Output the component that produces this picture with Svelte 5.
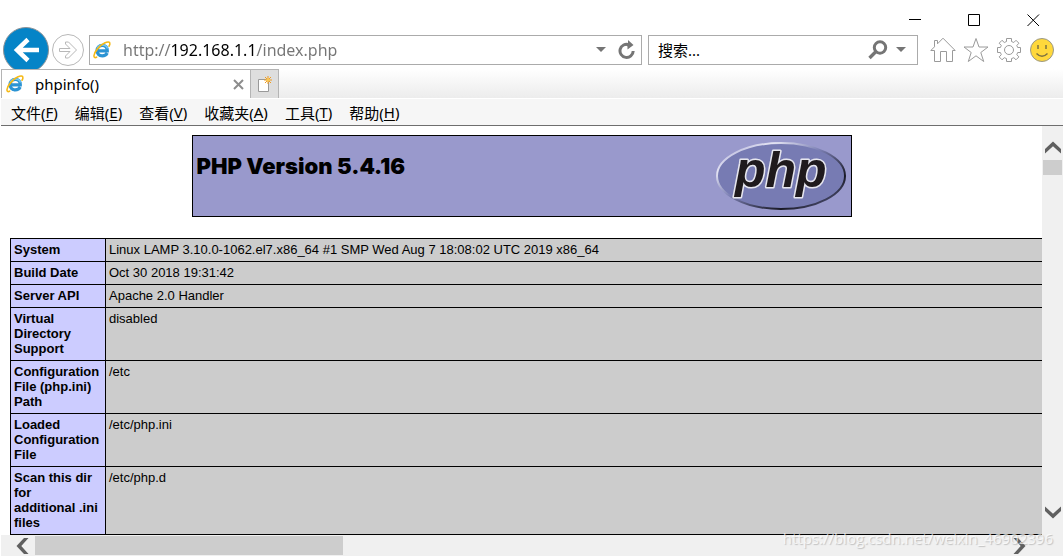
<script lang="ts">
  let url = $state('http://192.168.1.1/index.php');
  let query = $state('');

  const menus = [
    { label: '文件', key: 'F' },
    { label: '编辑', key: 'E' },
    { label: '查看', key: 'V' },
    { label: '收藏夹', key: 'A' },
    { label: '工具', key: 'T' },
    { label: '帮助', key: 'H' },
  ];

  const rows = [
    ['System', 'Linux LAMP 3.10.0-1062.el7.x86_64 #1 SMP Wed Aug 7 18:08:02 UTC 2019 x86_64'],
    ['Build Date', 'Oct 30 2018 19:31:42'],
    ['Server API', 'Apache 2.0 Handler'],
    ['Virtual Directory Support', 'disabled'],
    ['Configuration File (php.ini) Path', '/etc'],
    ['Loaded Configuration File', '/etc/php.ini'],
    ['Scan this dir for additional\u00a0.ini files', '/etc/php.d'],
  ];
</script>

{#snippet ieIcon()}
  <svg class="ie" viewBox="0 0 18 18" width="18" height="18" aria-hidden="true">
    <path d="M14.200 12C13.200 14 11.500 14.900 9.300 14.900C6 14.900 4 12.700 4 9.600C4 6.400 6.200 4.400 9.300 4.400C12.600 4.400 14.400 6.600 14.300 9.800H5.500" fill="none" stroke="#2b93d3" stroke-width="3.200" />
    <path d="M4 7.500C5 5.200 7 4 9.300 4C11.700 4 13.700 5.100 14.500 7.500" fill="none" stroke="#76c8f0" stroke-width="1.400" />
    <path d="M3.600 16.200C1.700 17.100 0.800 16.400 1 14.500C1.400 10.900 6.300 4.600 11.600 2C14.600 0.600 16.800 0.700 16.900 2.400C17 3.300 16.600 4.300 16 5.200" fill="none" stroke="#f5b916" stroke-width="1.600" stroke-linecap="round" />
  </svg>
{/snippet}

{#snippet chevron(turn: string)}
  <svg class="chevron {turn}" viewBox="0 0 18 18" width="18" height="18" aria-hidden="true">
    <path d="M1 15.500V11L9 3.500L17 11V15.500L9 8.300Z" fill="#606060" />
  </svg>
{/snippet}

<div class="window">
  <div class="titlebar">
    <button aria-label="Minimize">
      <svg viewBox="0 0 13 13" width="13" height="13"><path d="M0 5.500H12" stroke="#000" /></svg>
    </button>
    <button aria-label="Maximize">
      <svg viewBox="0 0 13 13" width="13" height="13"><path d="M.5 .5H11.500V11.500H.5Z" fill="none" stroke="#000" /></svg>
    </button>
    <button aria-label="Close">
      <svg viewBox="0 0 13 13" width="13" height="13"><path d="M.5 .5L12 12M12 .5L.5 12" stroke="#000" /></svg>
    </button>
  </div>

  <div class="navbar">
    <button class="back" aria-label="Back">
      <svg viewBox="0 0 48 42" width="48" height="42">
        <circle cx="24" cy="23" r="22.500" fill="#0584c7" stroke="#8d9297" />
        <path d="M37 23H16M26 12.500L15 23L26 33.500" fill="none" stroke="#fff" stroke-width="4.500" />
      </svg>
    </button>
    <button class="forward" aria-label="Forward">
      <svg viewBox="0 0 32 32" width="32" height="32">
        <circle cx="16" cy="16" r="15.500" fill="#fff" stroke="#b8b8b8" />
        <path d="M7.500 14.500H18L13.500 10V8H16.500L24.500 16L16.500 24H13.500V22L18 17.500H7.500Z" fill="#fff" stroke="#b8b8b8" />
      </svg>
    </button>

    <div class="box address">
      {@render ieIcon()}
      <input class="url" type="text" aria-label="Address" bind:value={url} />
      <button aria-label="Show address list">
        <svg viewBox="0 0 10 6" width="10" height="6"><path d="M0 0H10L5 5Z" fill="#757575" /></svg>
      </button>
      <button aria-label="Refresh">
        <svg viewBox="0 0 18 20" width="18" height="20">
          <path d="M11 4.700A6.600 6.600 0 1 0 15.200 11" fill="none" stroke="#757575" stroke-width="3" />
          <path d="M10 0L15.500 5L9.500 9.500V6.500L7 4.500L10 3.500Z" fill="#757575" />
        </svg>
      </button>
    </div>

    <div class="box search">
      <input type="text" aria-label="Search" placeholder="搜索..." bind:value={query} />
      <button aria-label="Search">
        <svg viewBox="0 0 20 20" width="20" height="20">
          <circle cx="12" cy="7.500" r="5.700" fill="none" stroke="#757575" stroke-width="3" />
          <path d="M8 11.500L1.500 18" stroke="#757575" stroke-width="3.400" />
        </svg>
      </button>
      <button aria-label="Search options">
        <svg viewBox="0 0 10 6" width="10" height="6"><path d="M0 0H10L5 5Z" fill="#757575" /></svg>
      </button>
    </div>

    <div class="tools">
      <button aria-label="Home">
        <svg viewBox="0 0 26 26" width="26" height="26">
          <path d="M.8 13.500L4.500 9.800V3.500H7.500V6.800L13 1.200L25.200 13.500H22.500V24.500H16.500V14.500H10.500V24.500H4.500V13.500Z" fill="#fff" stroke="#9a9a9a" stroke-linejoin="round" />
        </svg>
      </button>
      <button aria-label="Favorites">
        <svg viewBox="0 0 26 26" width="26" height="26">
          <path d="M13 1.500L16 10H25L17.800 15.500L20.700 24.500L13 18.800L5.300 24.500L8.200 15.500L1 10H10Z" fill="#fff" stroke="#9a9a9a" stroke-linejoin="round" />
        </svg>
      </button>
      <button aria-label="Tools">
        <svg viewBox="0 0 26 26" width="26" height="26">
          <path d="M10.500 1.500H15.500V4.500L17.800 5.500L20 3.300L22.900 6.200L20.800 8.500L21.700 10.500H24.500V15.500H21.700L20.800 17.700L22.900 19.900L20 22.800L17.800 20.700L15.500 21.600V24.500H10.500V21.600L8.300 20.700L6 22.800L3.200 19.900L5.300 17.700L4.400 15.500H1.500V10.500H4.400L5.300 8.500L3.200 6.200L6 3.300L8.300 5.500L10.500 4.500Z" fill="#fff" stroke="#9a9a9a" stroke-linejoin="round" />
          <circle cx="13" cy="13" r="4.500" fill="none" stroke="#9a9a9a" />
        </svg>
      </button>
      <button aria-label="Send a smile">
        <svg viewBox="0 0 26 26" width="26" height="26">
          <circle cx="13" cy="13" r="11.500" fill="#ffd83b" stroke="#99988a" />
          <path d="M9 8V12M17 8V12" stroke="#7d7140" stroke-width="1.500" />
          <path d="M7.500 16.500Q13 22 18.500 16.500" fill="none" stroke="#7d7140" stroke-width="1.500" />
        </svg>
      </button>
    </div>
  </div>

  <div class="tabs">
    <div class="tab">
      {@render ieIcon()}
      <span>phpinfo()</span>
      <button aria-label="Close tab">
        <svg viewBox="0 0 11 11" width="11" height="11"><path d="M1 1L10 10M10 1L1 10" stroke="#8d8d8d" stroke-width="2" /></svg>
      </button>
    </div>
    <button class="new-tab" aria-label="New tab">
      <svg viewBox="0 0 15 17" width="15" height="17">
        <path d="M1.500 3.500H11.500V15.500H1.500Z" fill="#fff" stroke="#999" />
        <path d="M11 0V8M7 4H15M8 1L14 7M14 1L8 7" stroke="#ef9b20" />
        <circle cx="11" cy="4" r="1.800" fill="#fbc74f" />
      </svg>
    </button>
  </div>

  <div class="menubar">
    {#each menus as menu}
      <button>{menu.label}(<u>{menu.key}</u>)</button>
    {/each}
  </div>

  <div class="viewport">
    <main>
      <div class="banner">
        <h1>PHP Version 5.4.16</h1>
        <svg viewBox="0 0 132 70" width="132" height="70" role="img" aria-label="PHP logo">
          <defs>
            <linearGradient id="rim" x1="0" y1="0" x2="1" y2="1">
              <stop offset="0" stop-color="#9a9acc" />
              <stop offset="0.22" stop-color="#e4e4f3" />
              <stop offset="0.45" stop-color="#7c80b4" />
              <stop offset="0.75" stop-color="#191925" />
              <stop offset="1" stop-color="#6d70a2" />
            </linearGradient>
          </defs>
          <ellipse cx="65" cy="35" rx="64" ry="33" fill="#777bb3" stroke="url(#rim)" stroke-width="2" />
          <text class="logo-text" x="19" y="46">php</text>
        </svg>
      </div>

      <table>
        <tbody>
          {#each rows as [name, value]}
            <tr>
              <th scope="row">{name}</th>
              <td>{value}</td>
            </tr>
          {/each}
        </tbody>
      </table>
    </main>

    <div class="vscroll">
      <button aria-label="Scroll up">{@render chevron('up')}</button>
      <div class="thumb"></div>
      <button class="end" aria-label="Scroll down">{@render chevron('down')}</button>
    </div>
  </div>

  <div class="hscroll">
    <button aria-label="Scroll left">{@render chevron('left')}</button>
    <div class="track"><div class="thumb"></div></div>
    <button class="end" aria-label="Scroll right">{@render chevron('right')}</button>
  </div>

  <div class="watermark">https://blog.csdn.net/weixin_46902396</div>
</div>

<style>
  :global(body) {
    margin: 0;
    background: #fff;
  }
  .window {
    position: relative;
    box-sizing: border-box;
    min-height: 100vh;
    padding: 0 1px 1px;
    display: flex;
    flex-direction: column;
    overflow: hidden;
    font-family: "Noto Sans", "Noto Sans CJK SC", sans-serif;
    font-size: 15px;
    color: #000;
  }
  button {
    display: flex;
    align-items: center;
    justify-content: center;
    margin: 0;
    padding: 0;
    border: 0;
    background: none;
    font: inherit;
    color: inherit;
  }
  svg {
    display: block;
    flex: none;
  }

  .titlebar {
    display: flex;
    justify-content: flex-end;
    gap: 46px;
    padding: 13px 23px 0 0;
    height: 14px;
  }

  .navbar {
    display: flex;
    align-items: center;
    height: 42px;
    padding: 0 8px 0 1px;
  }
  .back {
    margin-right: 2px;
  }
  .forward {
    margin: 4px 5px 0 0;
  }
  .box {
    display: flex;
    align-items: center;
    box-sizing: border-box;
    height: 30px;
    margin-top: 4px;
    border: 1px solid #ababab;
    background: #fff;
  }
  .box input {
    flex: 1;
    min-width: 0;
    height: 26px;
    padding: 0;
    border: 0;
    outline: 0;
    font: inherit;
    color: #000;
  }
  .box input::placeholder {
    color: #000;
    opacity: 1;
  }
  .address {
    flex: 1;
    gap: 12px;
    padding: 0 5px 0 3px;
  }
  /* scheme and path are dimmed, the host stays dark */
  .box .url {
    background: linear-gradient(90deg, #757575 47px, #000 47px 134px, #757575 134px);
    background-clip: text;
    -webkit-text-fill-color: transparent;
    font-size: 16px;
  }
  .search {
    width: 270px;
    gap: 8px;
    margin-left: 6px;
    padding: 0 11px 0 9px;
  }
  .tools {
    display: flex;
    gap: 7px;
    margin: 4px 0 0 12px;
  }

  .tabs {
    display: flex;
    height: 29px;
    background: linear-gradient(#fff, #ececec);
    border-bottom: 1px solid #fff;
  }
  .tab {
    display: flex;
    align-items: center;
    box-sizing: border-box;
    width: 249px;
    padding: 0 6px 0 4px;
    gap: 11px;
    border: 1px solid #b4b4b4;
    border-width: 1px 0 0 1px;
    background: #fff;
  }
  .tab span {
    flex: 1;
  }
  .new-tab {
    width: 29px;
    border: 1px solid #b4b4b4;
    border-bottom: 0;
    background: #dedede;
  }

  .menubar {
    display: flex;
    gap: 17px;
    height: 26px;
    padding-left: 10px;
    background: #f6f6f6;
    border-bottom: 1px solid #6e6e6e;
  }
  .menubar u {
    text-underline-offset: 2px;
  }

  .viewport {
    flex: 1;
    display: flex;
  }
  main {
    flex: 1;
    min-width: 0;
    overflow: hidden;
    padding-top: 9px;
    font-family: "Liberation Sans", Arial, sans-serif;
    font-size: 13px;
    line-height: 15px;
  }
  .banner {
    display: flex;
    justify-content: space-between;
    box-sizing: border-box;
    max-width: 660px;
    height: 82px;
    margin: 0 auto 21px;
    padding: 5px 3px 5px 4px;
    border: 1px solid #000;
    background: #9999cc;
  }
  h1 {
    margin: 12px 0 0;
    font-family: Inter, sans-serif;
    font-size: 22px;
    font-weight: 900;
    line-height: 26px;
  }
  .logo-text {
    font-family: "Liberation Sans", Arial, sans-serif;
    font-size: 50px;
    font-weight: bold;
    font-style: italic;
    fill: #1f1a1d;
    stroke: #e6e6ee;
    stroke-width: 3px;
    stroke-linejoin: round;
    paint-order: stroke;
  }
  table {
    width: 300%;
    margin-left: 9px;
    border-collapse: collapse;
  }
  th, td {
    border: 1px solid #000;
    padding: 3px 3px 4px;
    text-align: left;
    vertical-align: top;
  }
  th {
    width: 88px;
    background: #ccccff;
  }
  td {
    background: #cccccc;
  }

  .vscroll {
    display: flex;
    flex-direction: column;
    width: 21px;
    background: #f0f0f0;
  }
  .vscroll button {
    height: 34px;
    padding-top: 8px;
    box-sizing: border-box;
  }
  .vscroll .end {
    margin-top: auto;
    height: 44px;
    padding: 0;
  }
  .vscroll .thumb {
    height: 15px;
    margin: 0 1px;
    background: #cdcdcd;
  }
  .hscroll {
    display: flex;
    height: 21px;
    padding-right: 21px;
    background: #f0f0f0;
  }
  .hscroll button {
    width: 34px;
    padding-left: 8px;
    box-sizing: border-box;
  }
  .hscroll .end {
    width: 44px;
    padding: 0;
  }
  .track {
    flex: 1;
    padding: 1px 0;
  }
  .track .thumb {
    width: 32%;
    height: 19px;
    background: #cdcdcd;
  }
  .down {
    transform: rotate(180deg);
  }
  .left {
    transform: rotate(-90deg);
  }
  .right {
    transform: rotate(90deg);
  }

  .watermark {
    position: absolute;
    right: 11px;
    bottom: 7px;
    font-family: "Open Sans", sans-serif;
    font-size: 15px;
    line-height: 24px;
    color: rgba(255, 255, 255, 0.7);
    text-shadow: 1px 1px 1px rgba(120, 120, 120, 0.4);
    pointer-events: none;
  }
</style>
